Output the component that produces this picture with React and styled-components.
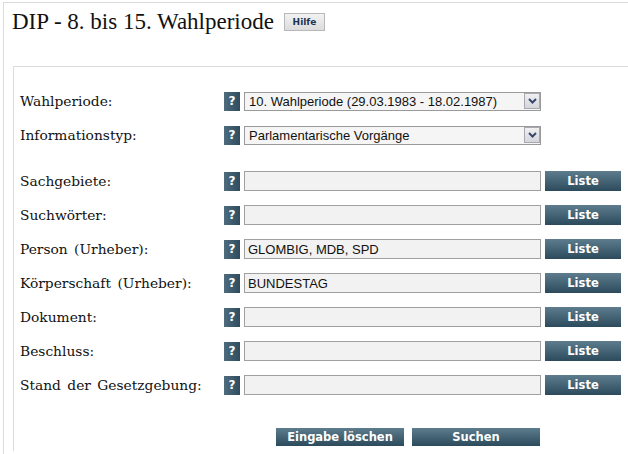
import React from "react";
import styled, { createGlobalStyle } from "styled-components";

const Global = createGlobalStyle`
  html, body { margin: 0; padding: 0; background: #fff; }
  body { font-family: "DejaVu Serif", serif; }
`;

const Page = styled.div`
  margin: 2px 0 0 3px;
  min-height: 452px;
  box-sizing: border-box;
  border-top: 1px solid #dcdcdc;
  border-left: 1px solid #dcdcdc;
`;

const Header = styled.div`
  display: flex;
  align-items: center;
  gap: 10px;
  padding: 5px 0 0 8px;
  height: 28px;
`;

const Title = styled.h1`
  margin: 0;
  font-family: "Liberation Serif", serif;
  font-weight: normal;
  font-size: 23px;
  line-height: 26px;
  color: #111;
`;

const HelpButton = styled.button`
  height: 18px;
  width: 41px;
  padding: 0;
  border: 1px solid #b8b8b8;
  background: linear-gradient(#f2f2f2, #dcdcdc);
  font-family: "DejaVu Sans", sans-serif;
  font-weight: bold;
  font-size: 9px;
  color: #1d3552;
  cursor: pointer;
`;

const Panel = styled.div`
  margin: 30px 0 0 9px;
  border-top: 1px solid #dcdcdc;
  border-left: 1px solid #dcdcdc;
  padding: 17px 0 0 6px;
  min-height: 385px;
  box-sizing: border-box;
`;

const Row = styled.div`
  display: grid;
  grid-template-columns: 200px 16px 297px 76px;
  column-gap: 4px;
  align-items: center;
  height: 34px;
  margin-top: ${(p) => (p.$gapBefore ? "12px" : "0")};
`;

const Label = styled.label`
  font-family: "DejaVu Serif", serif;
  font-size: 13.8px;
  word-spacing: 2px;
  color: #111;
  white-space: nowrap;
`;

const Q = styled.span`
  display: flex;
  align-items: center;
  justify-content: center;
  width: 16px;
  height: 19px;
  background: linear-gradient(90deg, #4f6c7e, #2e4c5e);
  color: #fff;
  font-family: "DejaVu Sans", sans-serif;
  font-weight: bold;
  font-size: 12px;
`;

const SelectBox = styled.div`
  display: flex;
  align-items: center;
  height: 19px;
  box-sizing: border-box;
  border: 1px solid #9a9a9a;
  background: #f5f5f5;
`;

const Select = styled.select`
  flex: 1;
  appearance: none;
  border: none;
  background: transparent;
  height: 17px;
  padding: 0 0 0 4px;
  font-family: "Liberation Sans", sans-serif;
  font-size: 13px;
  color: #111;
  outline: none;
`;

const Arrow = styled.span`
  display: flex;
  align-items: center;
  justify-content: center;
  width: 16px;
  height: 16px;
  box-sizing: border-box;
  border: 1px solid #a8a8b0;
  background: linear-gradient(#f0f0f2, #d4d6dc);
`;

const TextInput = styled.input`
  height: 20px;
  width: 297px;
  box-sizing: border-box;
  border: 1px solid #a0a0a0;
  background: #f2f2f2;
  padding: 0 0 0 3px;
  font-family: "Liberation Sans", sans-serif;
  font-size: 13px;
  color: #111;
  outline: none;
`;

const DarkButton = styled.button`
  height: ${(p) => (p.$tall ? "20px" : "18px")};
  width: ${(p) => p.$w || "76px"};
  padding: 0;
  border: none;
  background: linear-gradient(#5d7c8d, #2b4a5b);
  color: #fff;
  font-family: "DejaVu Sans", sans-serif;
  font-weight: bold;
  font-size: 11.5px;
  cursor: pointer;
`;

const Actions = styled.div`
  display: flex;
  gap: 8px;
  margin: 26px 0 0 256px;
`;

const Chevron = () => (
  <svg width="9" height="6" viewBox="0 0 9 6">
    <path d="M1 1 L4.5 4.5 L8 1" fill="none" stroke="#38476a" strokeWidth="2" />
  </svg>
);

const selects = [
  { label: "Wahlperiode:", value: "10. Wahlperiode (29.03.1983 - 18.02.1987)" },
  { label: "Informationstyp:", value: "Parlamentarische Vorgänge" },
];

const fields = [
  { label: "Sachgebiete:", value: "" },
  { label: "Suchwörter:", value: "" },
  { label: "Person (Urheber):", value: "GLOMBIG, MDB, SPD" },
  { label: "Körperschaft (Urheber):", value: "BUNDESTAG" },
  { label: "Dokument:", value: "" },
  { label: "Beschluss:", value: "" },
  { label: "Stand der Gesetzgebung:", value: "" },
];

export default function App() {
  return (
    <>
      <Global />
      <Page>
        <Header>
          <Title>DIP - 8. bis 15. Wahlperiode</Title>
          <HelpButton>Hilfe</HelpButton>
        </Header>
        <Panel>
          {selects.map((s) => (
            <Row key={s.label}>
              <Label>{s.label}</Label>
              <Q>?</Q>
              <SelectBox>
                <Select defaultValue={s.value}>
                  <option>{s.value}</option>
                </Select>
                <Arrow>
                  <Chevron />
                </Arrow>
              </SelectBox>
            </Row>
          ))}
          {fields.map((f, i) => (
            <Row key={f.label} $gapBefore={i === 0}>
              <Label>{f.label}</Label>
              <Q>?</Q>
              <TextInput defaultValue={f.value} />
              <DarkButton $tall>Liste</DarkButton>
            </Row>
          ))}
          <Actions>
            <DarkButton $w="128px">Eingabe löschen</DarkButton>
            <DarkButton $w="128px">Suchen</DarkButton>
          </Actions>
        </Panel>
      </Page>
    </>
  );
}
